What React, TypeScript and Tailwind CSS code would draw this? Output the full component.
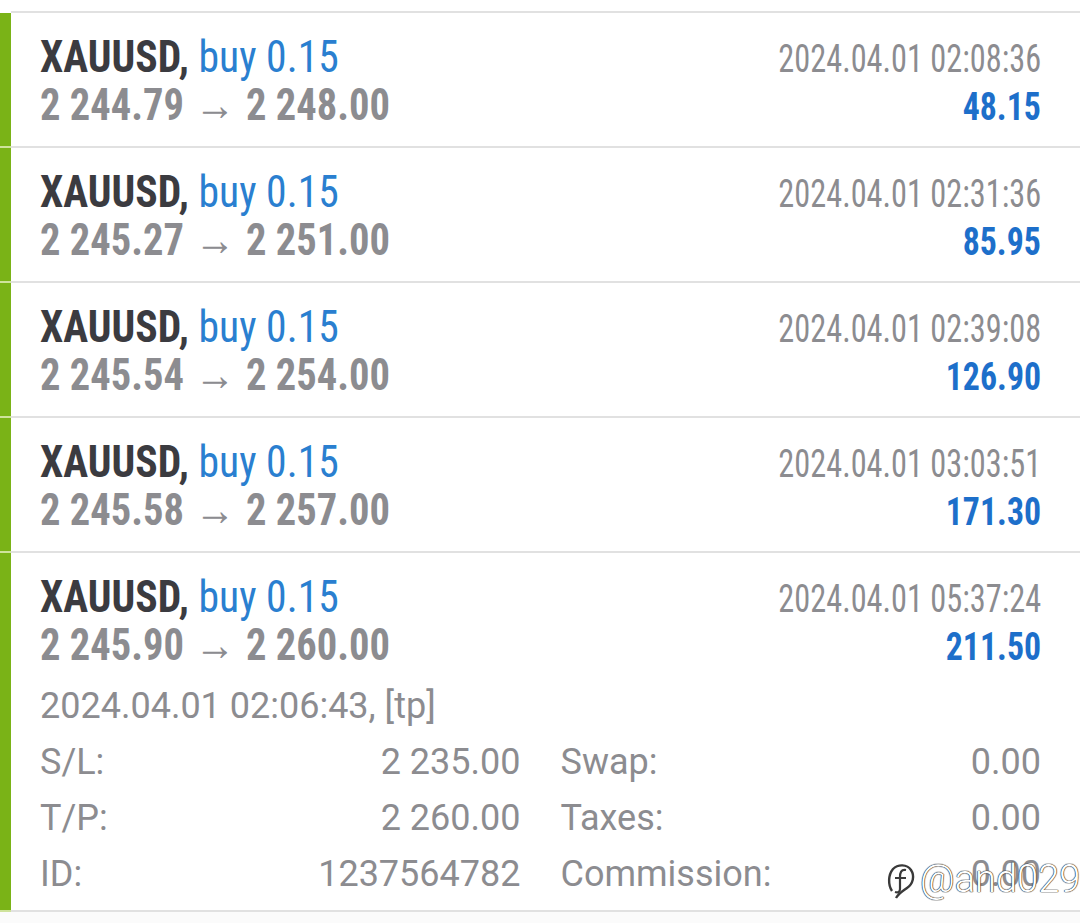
import React from "react";

const rows = [
  { open: "2 244.79", close: "2 248.00", time: "2024.04.01 02:08:36", profit: "48.15" },
  { open: "2 245.27", close: "2 251.00", time: "2024.04.01 02:31:36", profit: "85.95" },
  { open: "2 245.54", close: "2 254.00", time: "2024.04.01 02:39:08", profit: "126.90" },
  { open: "2 245.58", close: "2 257.00", time: "2024.04.01 03:03:51", profit: "171.30" },
  { open: "2 245.90", close: "2 260.00", time: "2024.04.01 05:37:24", profit: "211.50" },
];

function Separator() {
  return (
    <div className="flex h-[2px] w-full">
      <div className="w-[11px] bg-[#cfe39c]" />
      <div className="flex-1 bg-[#e1e1e1]" />
    </div>
  );
}

function Header({ r }: { r: (typeof rows)[number] }) {
  return (
    <>
      <div className="flex h-[48px] items-baseline justify-between leading-[48px]">
        <div className="inline-block origin-left scale-x-[0.925] whitespace-nowrap text-[45px]">
          <span className="font-bold text-[#3b3b40]">XAUUSD,</span>{" "}
          <span className="font-normal text-[#2a7fd0]">buy 0.15</span>
        </div>
        <div className="inline-block origin-right scale-x-[0.85] whitespace-nowrap text-[38px] font-normal text-[#8c8c90]">
          {r.time}
        </div>
      </div>
      <div className="flex h-[48px] items-baseline justify-between leading-[48px]">
        <div className="inline-block origin-left scale-x-[0.9] whitespace-nowrap text-[45px] font-bold text-[#8c8c90]">
          {r.open}
          <span className="mx-[12px] font-normal text-[#8c8c90]">→</span>
          {r.close}
        </div>
        <div className="inline-block origin-right scale-x-[0.89] whitespace-nowrap text-[38px] font-bold text-[#1d6fca]">
          {r.profit}
        </div>
      </div>
    </>
  );
}

function Detail({ label, value }: { label: string; value: string }) {
  return (
    <div className="flex h-[56px] items-baseline justify-between leading-[56px]">
      <span>{label}</span>
      <span>{value}</span>
    </div>
  );
}

export default function App() {
  return (
    <div className="relative h-[923px] w-full overflow-hidden bg-white font-['Roboto_Condensed',Roboto,sans-serif]">
      <div className="h-[11px]" />
      <div className="flex h-[2px] w-full">
        <div className="w-[11px] bg-white" />
        <div className="flex-1 bg-[#e1e1e1]" />
      </div>
      {rows.map((r, i) => (
        <React.Fragment key={i}>
          {i > 0 && <Separator />}
          <div className="flex">
            <div className="w-[11px] shrink-0 bg-[#7ab317]" />
            <div className="flex-1 pl-[29px] pr-[39px] pt-[20px] pb-[17px]">
              <Header r={r} />
              {i === rows.length - 1 && (
                <div className="mt-[9px] -mb-[9px] font-['Roboto',sans-serif] text-[36px] text-[#8c8c90]">
                  <div className="flex h-[56px] items-baseline leading-[56px]">
                    2024.04.01 02:06:43, [tp]
                  </div>
                  <div className="grid grid-cols-2 gap-x-[40px]">
                    <Detail label="S/L:" value="2 235.00" />
                    <Detail label="Swap:" value="0.00" />
                    <Detail label="T/P:" value="2 260.00" />
                    <Detail label="Taxes:" value="0.00" />
                    <Detail label="ID:" value="1237564782" />
                    <Detail label="Commission:" value="0.00" />
                  </div>
                </div>
              )}
            </div>
          </div>
        </React.Fragment>
      ))}
      <Separator />
      <div className="h-[11px] bg-[#fbfbfb]" />
      <div className="absolute left-[885px] top-[851px] flex items-center gap-[3px]">
        <svg width="32" height="40" viewBox="0 0 32 40" fill="none">
          <path
            d="M7 31 C3 25 3 15 8 9 C13 4 22 4 26 10 C30 16 28 24 22 28 C18 31 14 33 11 38"
            stroke="#3a3a3a"
            strokeWidth="2.4"
            fill="white"
          />
          <path d="M21 10 C16 9 15 13 15 17 L15 29 C15 32 13 33 10 32 M10 18 L21 18" stroke="#3a3a3a" strokeWidth="2.2" />
        </svg>
        <span className="font-['Roboto',sans-serif] text-[38px] font-light text-white [text-shadow:0_0_1px_#222,0_0_1px_#222,0_0_1px_#222]">
          @and029
        </span>
      </div>
    </div>
  );
}
